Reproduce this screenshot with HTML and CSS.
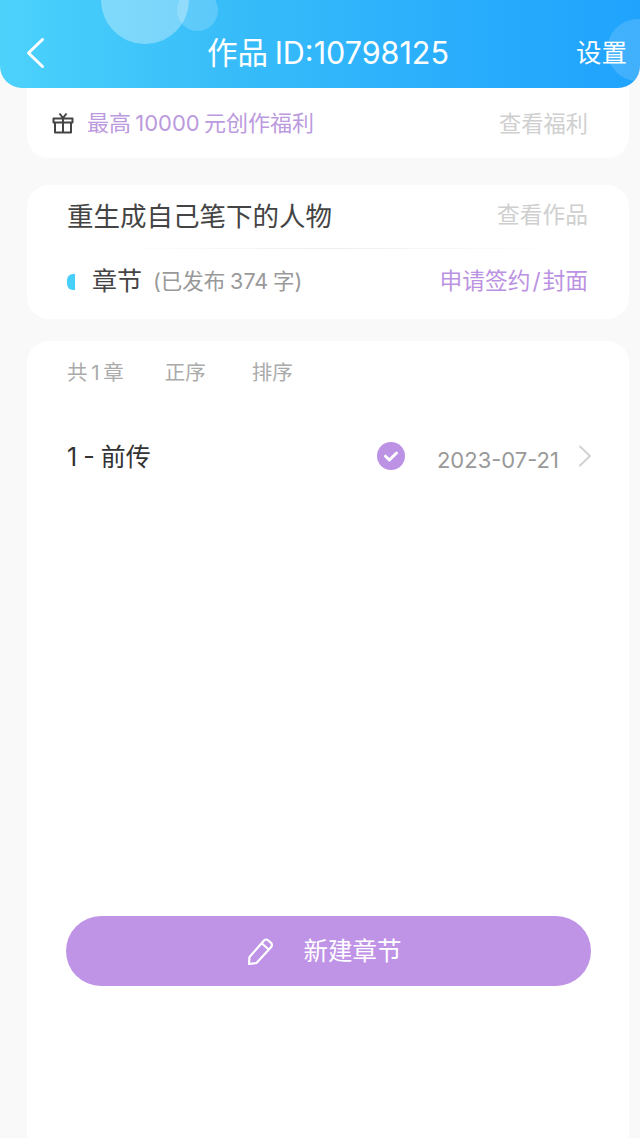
FILE: index.html
```html
<!DOCTYPE html>
<html lang="zh">
<head>
<meta charset="utf-8">
<title>作品</title>
<link rel="stylesheet" href="styles.css">
</head>
<body>
<div class="page">
  <header class="header">
    <span class="bubble bubble-a"></span>
    <span class="bubble bubble-b"></span>
    <span class="bubble bubble-c"></span>
    <svg class="back" width="20" height="32" viewBox="0 0 20 32"><path d="M17.500 2.500 3.500 16l14 13.500" fill="none" stroke="#fff" stroke-width="3" stroke-linecap="round" stroke-linejoin="round"/></svg>
    <h1 class="title">作品 ID:10798125</h1>
    <span class="settings">设置</span>
  </header>

  <section class="card welfare">
    <svg class="gift" width="22" height="22" viewBox="0 0 22 22"><path d="M1.500 6.500h19v4h-19zM3 10.500V20.500h16V10.500M11 6.500v14M7.500 1.500 11 6l3.500-4.500" fill="none" stroke="#444" stroke-width="2" stroke-linejoin="round"/></svg>
    <span class="welfare-text">最高 10000 元创作福利</span>
    <span class="link-grey">查看福利</span>
  </section>

  <section class="card work">
    <div class="work-top">
      <span class="work-name">重生成自己笔下的人物</span>
      <span class="link-grey view-work">查看作品</span>
    </div>
    <div class="work-line"></div>
    <div class="work-bottom">
      <span class="mark"></span>
      <span class="chapter">章节</span>
      <span class="published">(已发布 374 字)</span>
      <span class="apply">申请签约 / 封面</span>
    </div>
  </section>

  <section class="card list">
    <div class="tabs">
      <span class="tab-count">共 1 章</span>
      <span class="tab-order">正序</span>
      <span>排序</span>
    </div>
    <div class="row">
      <span class="row-name">1 - 前传</span>
      <svg class="check" width="28" height="28" viewBox="0 0 28 28"><circle cx="14" cy="14" r="14" fill="#bc92e4"/><path d="M8.500 14.200 12.400 18 19.500 11" fill="none" stroke="#fff" stroke-width="3" stroke-linecap="round" stroke-linejoin="round"/></svg>
      <span class="row-date">2023-07-21</span>
      <svg class="chev" width="14" height="22" viewBox="0 0 14 22"><path d="M2 1.500 12 11 2 20.500" fill="none" stroke="#d2d2d2" stroke-width="2" stroke-linecap="round" stroke-linejoin="round"/></svg>
    </div>
    <button class="new-btn" type="button">
      <svg width="30" height="30" viewBox="0 0 30 30"><path d="M3 28 3.500 21 18 4.500a2.800 2.800 0 0 1 4-.3l3 2.700a2.800 2.800 0 0 1 .2 4L10.500 27zM16 7.500l7 6.200" fill="none" stroke="#fff" stroke-width="2.200" stroke-linejoin="round"/></svg>
      <span class="new-label">新建章节</span>
    </button>
  </section>
</div>
</body>
</html>
```
FILE: styles.css
```css
* { box-sizing: border-box; }
html, body { margin: 0; padding: 0; }
body {
  width: 640px;
  height: 1138px;
  overflow: hidden;
  background: #f9f9f9;
  font-family: "Inter", "Noto Sans CJK SC", sans-serif;
  word-spacing: -0.12em;
}
.page { display: flex; flex-direction: column; height: 1138px; }

.header {
  position: relative;
  flex: none;
  height: 88px;
  display: flex;
  align-items: center;
  overflow: hidden;
  padding: 18px 13px 0 25px;
  border-radius: 0 0 22px 22px;
  background: linear-gradient(90deg, #4cd2fb 0%, #38bdf9 35%, #2aaefc 70%, #1fa3fd 100%);
  color: #fff;
}
.bubble { position: absolute; border-radius: 50%; }
.bubble-a { left: 101px; top: -44px; width: 88px; height: 88px; background: rgba(255,255,255,.32); }
.bubble-b { left: 177px; top: -10px; width: 41px; height: 41px; background: rgba(255,255,255,.18); }
.bubble-c { left: 607px; top: 19px; width: 62px; height: 62px; background: rgba(255,255,255,.15); }
.back { flex: none; position: relative; }
.title {
  flex: 1;
  position: relative;
  margin: 0;
  padding-left: 34px;
  text-align: center;
  font-size: 30.500px;
  line-height: 40px;
  font-weight: 400;
}
.settings { position: relative; margin: 0 0 1px -1px; font-size: 25.500px; line-height: 36px; }

.card { margin: 0 11px 0 27px; background: #fff; border-radius: 22px; }

.welfare {
  height: 70px;
  flex: none;
  display: flex;
  align-items: center;
  padding: 0 41px 0 25px;
  border-radius: 0 0 22px 22px;
}
.gift { flex: none; }
.welfare-text { margin: 0 0 4px 13px; font-size: 22px; color: #bb9ade; }
.link-grey { margin: 0 0 2px auto; font-size: 22.250px; color: #cfcfcf; }
.view-work { font-size: 22.750px; }

.work { flex: none; margin-top: 27px; height: 134px; padding: 0 41px 0 40px; }
.work-top { height: 63px; display: flex; align-items: center; padding-bottom: 4px; }
.work-name { font-size: 26.500px; color: #444; }
.work-line {
  height: 1px;
  background: linear-gradient(90deg, #fff 10%, #eeeeee 50%, #fff 95%);
}
.work-bottom { height: 66px; display: flex; align-items: center; padding-bottom: 6px; }
.mark { width: 8px; height: 16px; border-radius: 6px 0 0 6px; background: #46cffa; flex: none; margin-top: 6px; }
.chapter { margin-left: 17px; font-size: 25px; color: #444; }
.published { margin-left: 11px; font-size: 21.500px; color: #999; word-spacing: -0.06em; }
.apply { margin-left: auto; font-size: 22.750px; color: #bb92e2; word-spacing: -0.2em; }

.list { flex: 1; margin-top: 22px; padding: 16px 37px 0 40px; border-radius: 22px 22px 0 0; }
.tabs { display: flex; font-size: 20.500px; line-height: 32px; color: #aaa; }
.tab-count { word-spacing: -0.1em; margin-right: 41px; }
.tab-order { margin-right: 46px; }
.row { display: flex; align-items: center; margin-top: 47px; height: 40px; }
.row-name { font-size: 25px; color: #333; margin-bottom: 2px; word-spacing: -0.04em; }
.check { margin-left: auto; flex: none; }
.row-date { margin-left: 32px; margin-top: 8px; font-size: 22px; color: #999; }
.chev { margin-left: 19px; flex: none; }

.new-btn {
  width: 525px;
  height: 70px;
  margin: 440px 0 0 -1px;
  padding: 0 10px 0 0;
  display: flex;
  align-items: center;
  justify-content: center;
  gap: 28px;
  border: 0;
  border-radius: 35px;
  background: #bf94e7;
  color: #fff;
  font-family: inherit;
  font-size: 24.500px;
}
.new-label { margin-bottom: 4px; }
```
